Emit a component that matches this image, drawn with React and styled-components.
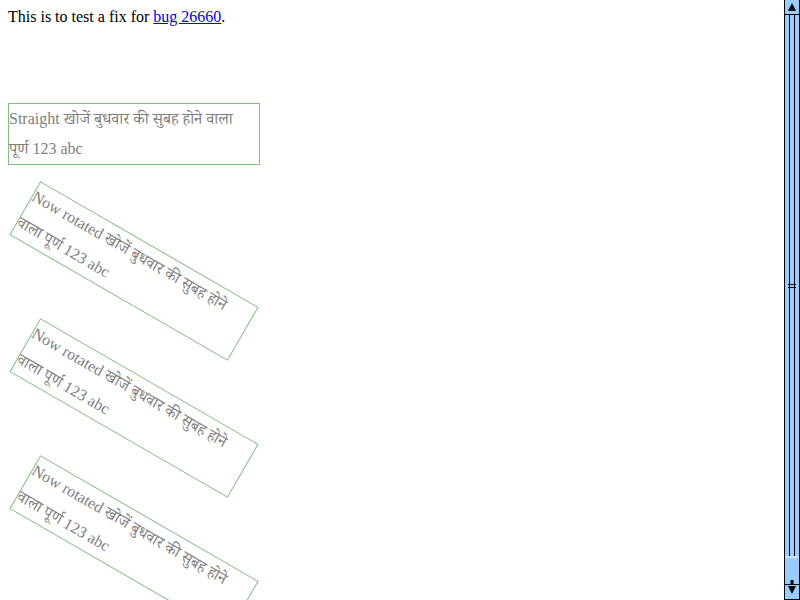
import React from "react";
import styled, { createGlobalStyle } from "styled-components";

const GlobalStyle = createGlobalStyle`
  html, body {
    margin: 0;
    background: #ffffff;
  }
  body {
    font-family: "Liberation Serif", "Noto Serif Devanagari", "Noto Sans Devanagari", "Noto Sans", serif;
    font-size: 16px;
    color: #000;
  }
`;

const Viewport = styled.div`
  display: flex;
  height: 100vh;
  overflow: hidden;
`;

const Content = styled.div`
  flex: 1;
  min-width: 0;
  padding: 8px;
  overflow: hidden;
`;

const Intro = styled.div`
  line-height: 18px;
`;

const Link = styled.a`
  color: #0000ee;
  text-decoration: underline;
`;

const Stack = styled.div`
  display: flex;
  flex-direction: column;
  align-items: flex-start;
  gap: 75px;
  margin-top: 77px;
`;

const Box = styled.div`
  flex-shrink: 0;
  width: 250px;
  border: 1px solid #80c080;
  color: #808080;
  line-height: 30px;
  white-space: nowrap;
  transform: ${(p) => (p.$rotated ? "rotate(30deg)" : "none")};
`;

/* scrollbar drawn as a column beside the content */
const Scrollbar = styled.div`
  width: 16px;
  flex-shrink: 0;
  display: flex;
  flex-direction: column;
  box-sizing: border-box;
  background: #99ccff;
  border-left: 1px solid #000;
  border-right: 1px solid #000;
`;

const ArrowButton = styled.div`
  height: ${(p) => p.$height}px;
  flex-shrink: 0;
  display: flex;
  > svg {
    display: block;
  }
`;

const Track = styled.div`
  flex: 1;
  display: flex;
  flex-direction: column;
  align-items: center;
`;

const Thumb = styled.div`
  width: 6px;
  box-sizing: border-box;
  border-left: 1px solid #000;
  border-right: 1px solid #000;
  display: flex;
  flex-direction: column;
  justify-content: center;
  align-items: center;
`;

const Grip = styled.div`
  width: 8px;
  height: 2px;
  flex-shrink: 0;
  border-top: 1px solid #000;
  border-bottom: 1px solid #000;
`;

const ThumbEnd = styled.div`
  align-self: stretch;
  height: 2px;
  background: #c8e2ff;
`;

const lines = {
  straight: ["Straight खोजें बुधवार की सुबह होने वाला", "पूर्ण 123 abc"],
  rotated: ["Now rotated खोजें बुधवार की सुबह होने", "वाला पूर्ण 123 abc"],
};

const TextBox = ({ rotated }) => {
  const [first, second] = rotated ? lines.rotated : lines.straight;
  return (
    <Box $rotated={rotated}>
      {first}
      <br />
      {second}
    </Box>
  );
};

const UpArrow = () => (
  <svg width="14" height="15" viewBox="0 0 14 15">
    <polygon points="7,3 3,11 11,11" fill="#000" />
    <rect x="0" y="14" width="14" height="1" fill="#000" />
  </svg>
);

const DownArrow = () => (
  <svg width="14" height="20" viewBox="0 0 14 20">
    <rect x="5.5" y="0" width="3" height="4" fill="#000" />
    <rect x="0" y="4" width="14" height="1" fill="#000" />
    <polygon points="3,6 11,6 7,14" fill="#000" />
    <rect x="0" y="19" width="14" height="1" fill="#000" />
  </svg>
);

const ScrollBar = ({ thumb }) => (
  <Scrollbar>
    <ArrowButton $height={15}>
      <UpArrow />
    </ArrowButton>
    <Track>
      <Thumb style={{ height: thumb }}>
        <Grip />
      </Thumb>
      <ThumbEnd />
    </Track>
    <ArrowButton $height={20}>
      <DownArrow />
    </ArrowButton>
  </Scrollbar>
);

export default function App() {
  return (
    <>
      <GlobalStyle />
      <Viewport>
        <Content>
          <Intro>
            This is to test a fix for <Link href="#">bug 26660</Link>.
          </Intro>
          <Stack>
            <TextBox />
            <TextBox rotated />
            <TextBox rotated />
            <TextBox rotated />
          </Stack>
        </Content>
        <ScrollBar thumb={541} />
      </Viewport>
    </>
  );
}
